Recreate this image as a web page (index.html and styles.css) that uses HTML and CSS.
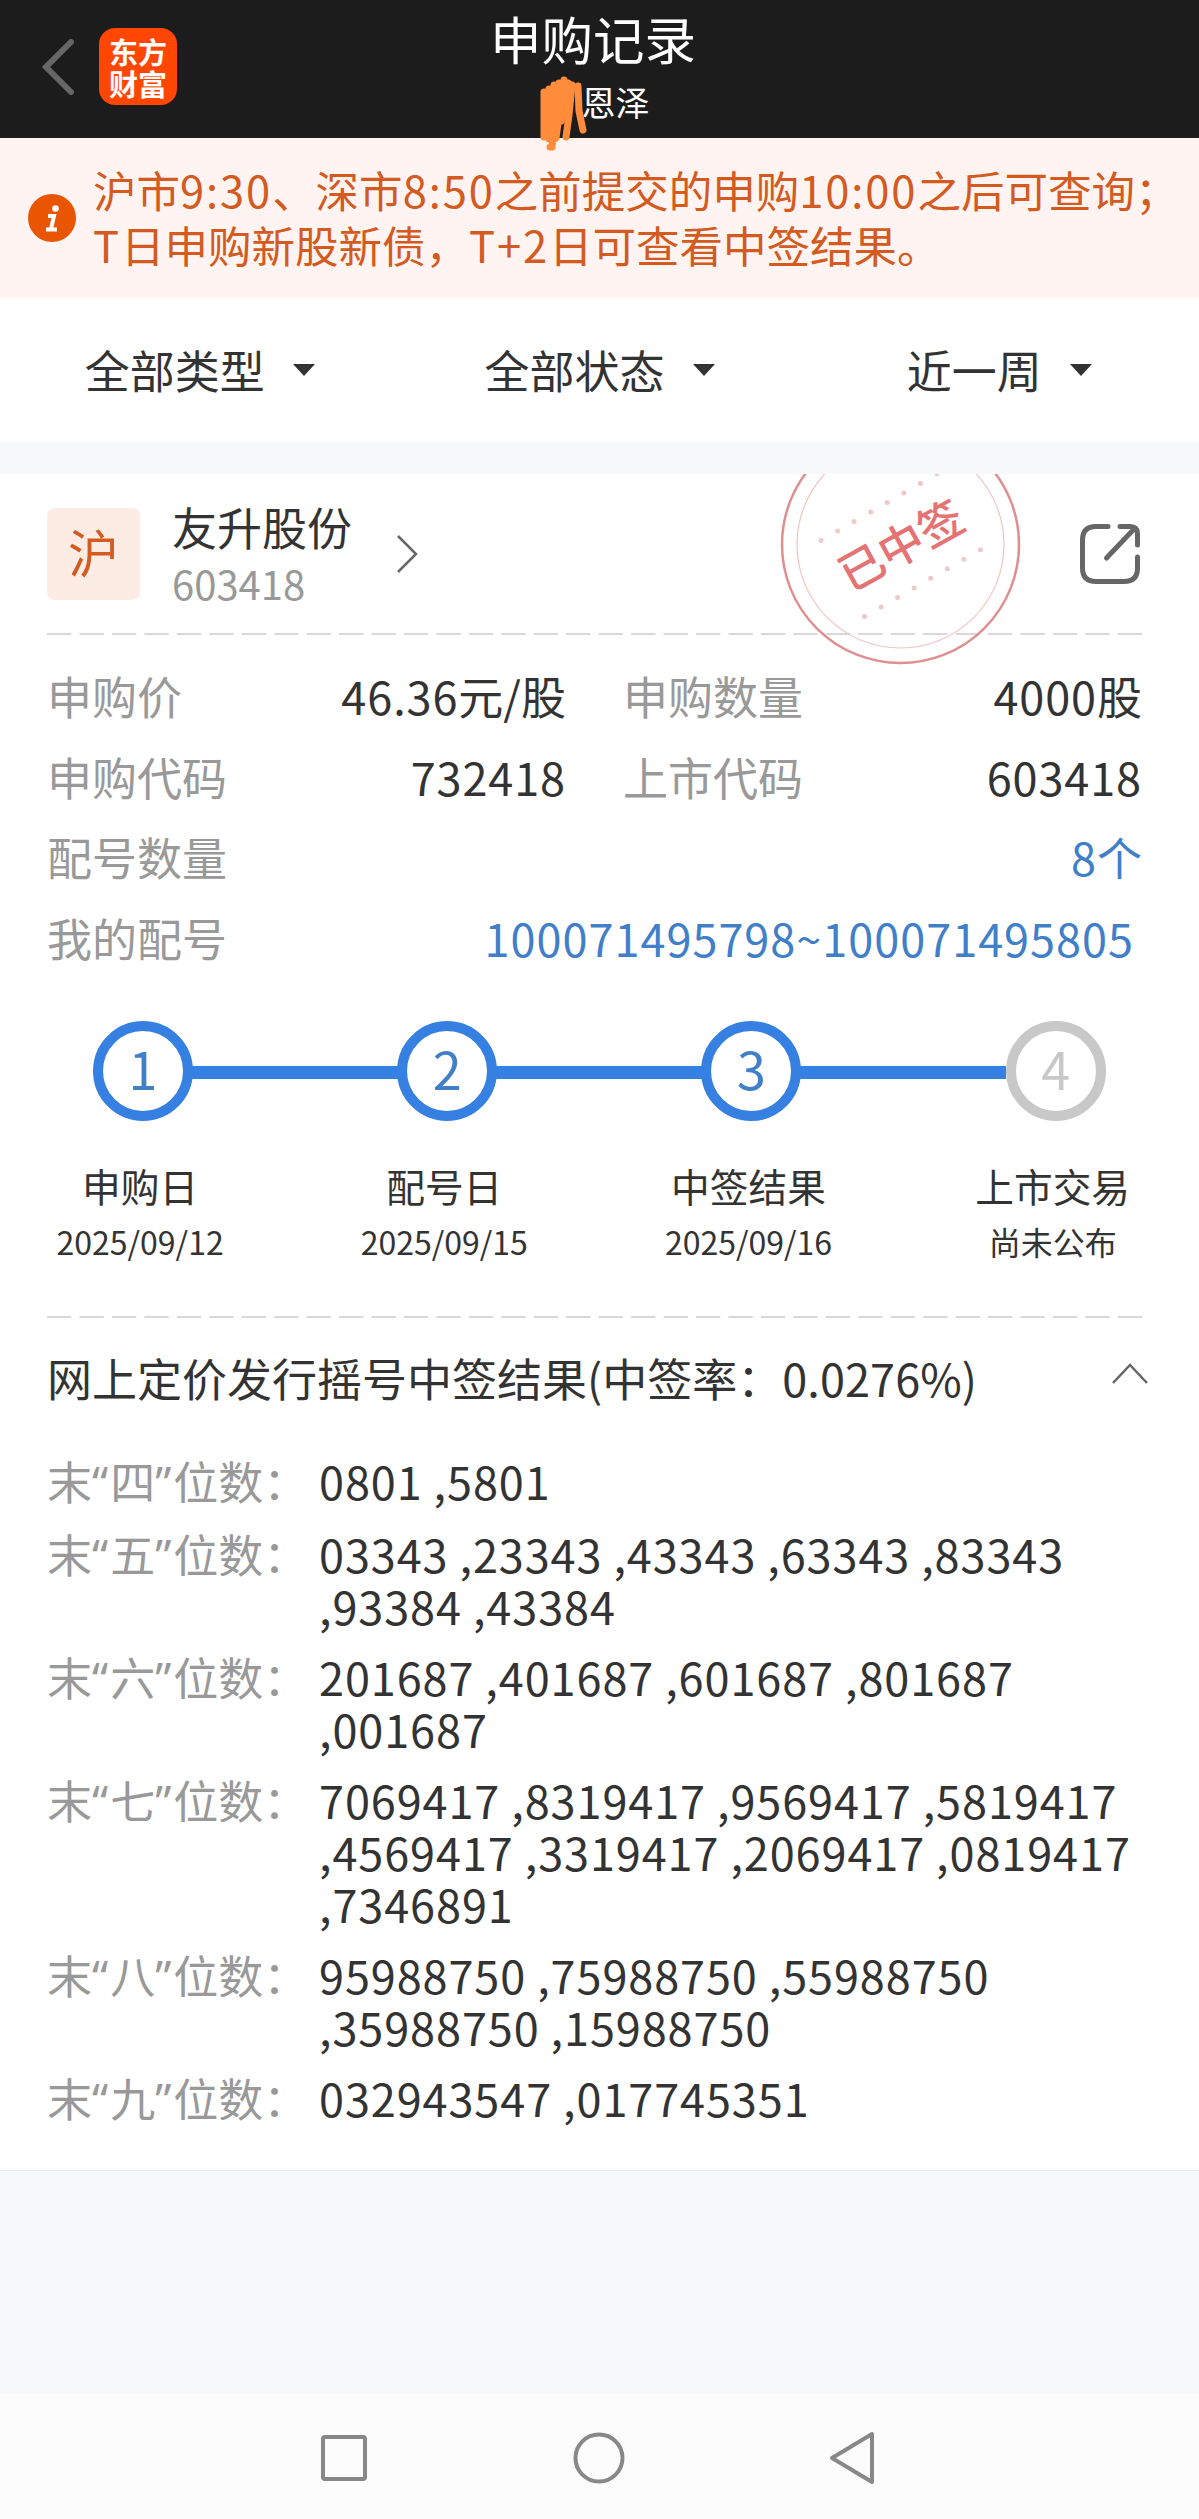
FILE: index.html
```
<!DOCTYPE html>
<html lang="zh-CN">
<head>
  <meta charset="UTF-8" />
  <meta name="viewport" content="width=device-width, initial-scale=1.0"/>
  <title>申购记录</title>
  <link rel="stylesheet" href="styles.css">
</head>
<body>

<!-- Header -->
<div class="top-bar">
  <svg class="back" width="32" height="56" viewBox="0 0 32 56"><path d="M29 3L4 28L29 53"/></svg>
  <div class="logo"><span>东方</span><span>财富</span></div>
  <div class="heading">
    <div class="title">申购记录</div>
    <div class="account">恩泽</div>
  </div>
  <svg class="scribble" width="50" height="80" viewBox="0 0 50 80">
    <path d="M4 17V62M9 14V64M14 10V64M19 8L12 72L10 72M24 5L16 63M28 8L21 46M32 10L29 40L26 62"/>
    <path d="M38 11L39 36L43 55"/>
  </svg>
</div>

<!-- Notice -->
<div class="notice">
  <svg width="48" height="48" viewBox="0 0 48 48">
    <circle cx="24" cy="24" r="24"/>
    <circle class="mark" cx="27.500" cy="14.500" r="3.300"/>
    <path class="stem" d="M20 22H26L23 35M18 35.500H29"/>
  </svg>
  <div class="notice-text">
    沪市<span class="num">9:30</span>、深市<span class="num">8:50</span>之前提交的申购<span class="num">10:00</span>之后可查询；<br>
    <span class="num">T</span>日申购新股新债，<span class="num">T+2</span>日可查看中签结果。
  </div>
</div>

<!-- Filters -->
<div class="filters">
  <div class="filter">全部类型<i></i></div>
  <div class="filter">全部状态<i></i></div>
  <div class="filter">近一周<i></i></div>
</div>

<!-- Record card -->
<div class="card">
  <div class="stock">
    <div class="market">沪</div>
    <div class="stock-info">
      <div class="stock-name">友升股份</div>
      <div class="stock-code">603418</div>
    </div>
    <svg class="arrow" width="24" height="40" viewBox="0 0 24 40"><path d="M3 2L21 20L3 38"/></svg>
    <svg class="share" width="60" height="60" viewBox="0 0 60 60">
      <path d="M28 2.500H16Q2.500 2.500 2.500 16V44Q2.500 57.500 16 57.500H44Q57.500 57.500 57.500 44V33M40 2.500H50Q57.500 2.500 57.500 10V21M26.500 34L54 5"/>
    </svg>
  </div>

  <svg class="stamp" width="244" height="194" viewBox="779 474 244 194">
    <circle class="outer" cx="900.500" cy="544.500" r="118.500"/>
    <circle class="inner" cx="900.500" cy="544.500" r="103.500"/>
    <path class="dots" d="M821 540.500L942 471M864.500 616.500L986 546.500"/>
    <text x="901" y="562" transform="rotate(-29 901 545)">已中签</text>
  </svg>

  <svg class="dashes" width="1098" height="2" viewBox="0 0 1098 2"><path d="M0 1H1098"/></svg>

  <div class="details">
    <div class="row">
      <span class="label">申购价</span><span class="value half"><span class="num">46.36</span>元/股</span>
      <span class="label second">申购数量</span><span class="value"><span class="num">4000</span>股</span>
    </div>
    <div class="row">
      <span class="label">申购代码</span><span class="value half num">732418</span>
      <span class="label second">上市代码</span><span class="value num">603418</span>
    </div>
    <div class="row">
      <span class="label">配号数量</span><span class="value blue"><span class="num">8</span>个</span>
    </div>
    <div class="row">
      <span class="label">我的配号</span><span class="value blue num numbers">100071495798~100071495805</span>
    </div>
  </div>

  <!-- Timeline -->
  <div class="steps">
    <div class="step">
      <div class="circle">1</div>
      <div class="step-name">申购日</div>
      <div class="step-date">2025/09/12</div>
    </div>
    <div class="step">
      <div class="circle">2</div>
      <div class="step-name">配号日</div>
      <div class="step-date">2025/09/15</div>
    </div>
    <div class="step">
      <div class="circle">3</div>
      <div class="step-name">中签结果</div>
      <div class="step-date">2025/09/16</div>
    </div>
    <div class="step pending">
      <div class="circle">4</div>
      <div class="step-name">上市交易</div>
      <div class="step-date">尚未公布</div>
    </div>
  </div>

  <svg class="dashes" width="1098" height="2" viewBox="0 0 1098 2"><path d="M0 1H1098"/></svg>

  <!-- Lottery result -->
  <div class="result-title">
    <span>网上定价发行摇号中签结果(中签率：<span class="rate">0.0276%)</span></span>
    <svg width="38" height="24" viewBox="0 0 38 24"><path d="M2 21L19 3L36 21"/></svg>
  </div>
  <div class="results">
    <div class="result">
      <div class="label">末<q>“</q>四<q>”</q>位数：</div>
      <div class="num">0801 ,5801</div>
    </div>
    <div class="result">
      <div class="label">末<q>“</q>五<q>”</q>位数：</div>
      <div class="num">03343 ,23343 ,43343 ,63343 ,83343<br>,93384 ,43384</div>
    </div>
    <div class="result">
      <div class="label">末<q>“</q>六<q>”</q>位数：</div>
      <div class="num">201687 ,401687 ,601687 ,801687<br>,001687</div>
    </div>
    <div class="result">
      <div class="label">末<q>“</q>七<q>”</q>位数：</div>
      <div class="num">7069417 ,8319417 ,9569417 ,5819417<br>,4569417 ,3319417 ,2069417 ,0819417<br>,7346891</div>
    </div>
    <div class="result">
      <div class="label">末<q>“</q>八<q>”</q>位数：</div>
      <div class="num">95988750 ,75988750 ,55988750<br>,35988750 ,15988750</div>
    </div>
    <div class="result">
      <div class="label">末<q>“</q>九<q>”</q>位数：</div>
      <div class="num">032943547 ,017745351</div>
    </div>
  </div>
</div>

<!-- System navigation -->
<div class="nav">
  <svg width="60" height="60" viewBox="0 0 60 60"><rect x="9" y="9" width="42" height="42" rx="2"/></svg>
  <svg width="60" height="60" viewBox="0 0 60 60"><circle cx="30" cy="30" r="23.500"/></svg>
  <svg width="60" height="60" viewBox="0 0 60 60"><path d="M49 6V54L9 30Z"/></svg>
</div>

</body>
</html>
```
FILE: styles.css
```
* { box-sizing: border-box; margin: 0; padding: 0; }

body {
  display: flex;
  flex-direction: column;
  height: 2519px;
  font-family: "Noto Sans CJK SC", sans-serif;
  font-size: 45px;
  line-height: 52px;
  color: #333;
  background: #f6f8fa;
  white-space: nowrap;
}

svg { display: block; flex: none; fill: none; }

.num { letter-spacing: 0.92px; }
.label { color: #999; }

/* header */
.top-bar {
  position: relative;
  display: flex;
  height: 138px;
  background: #1c1c1c;
  color: white;
}

.back { margin: 39px 0 0 42px; stroke: #666; stroke-width: 6; stroke-linecap: round; }

.logo {
  display: flex;
  flex-direction: column;
  justify-content: center;
  align-items: center;
  width: 78px;
  height: 77px;
  margin: 28px 0 0 25px;
  border-radius: 16px;
  background: #ff4603;
  font-size: 29px;
  font-weight: bold;
  line-height: 32px;
}

.heading { margin: 8px 0 0 313px; width: 206px; text-align: center; }
.title { font-size: 51.5px; line-height: 60px; }
.account { padding-left: 45px; font-size: 34px; line-height: 68px; }

.scribble {
  position: absolute;
  left: 540px;
  top: 75px;
  stroke: #ff8c3a;
  stroke-width: 7;
  stroke-linecap: round;
  stroke-linejoin: round;
}

/* notice */
.notice {
  display: flex;
  height: 160px;
  padding: 24px 0 0 28px;
  background: #fff4f1;
  color: #d35a20;
}

.notice svg { margin: 32px 17px 0 0; fill: #ea5504; }
.notice .mark { fill: white; }
.notice .stem { fill: none; stroke: white; stroke-width: 4; }
.notice-text { font-size: 43.5px; line-height: 55px; }
.notice-text .num { letter-spacing: 1.9px; }

/* filters */
.filters {
  display: flex;
  height: 144px;
  background: white;
}

.filter {
  flex: 1;
  display: flex;
  justify-content: center;
  align-items: center;
  gap: 28px;
}

.filter i {
  border: 11px solid transparent;
  border-top: 12px solid #333;
  border-bottom: 0;
}

/* card */
.card {
  position: relative;
  height: 1697px;
  margin-top: 32px;
  padding: 0 55px 0 47px;
  background: white;
  border-bottom: 1px solid #eaeaea;
}

.stock { display: flex; height: 159px; padding-top: 34px; }

.market {
  width: 93px;
  height: 92px;
  border-radius: 8px;
  background: #fdece4;
  color: #d35a20;
  font-size: 51px;
  line-height: 86px;
  text-align: center;
}

.stock-info { width: 180px; margin: -9px 0 0 32px; }
.stock-name { line-height: 56px; }
.stock-code { font-size: 40px; line-height: 56px; color: #999; }
.arrow { margin: 26px 0 0 43px; stroke: #666; stroke-width: 2.5; }
.share { margin: 16px 4px 0 auto; stroke: #666; stroke-width: 5; stroke-linecap: round; }

.stamp { position: absolute; left: 779px; top: 0; }
.outer { stroke: #e08f90; stroke-width: 2.5; }
.inner { stroke: #f0c4c4; stroke-width: 1.2; }
.dots { stroke: #efc9c9; stroke-width: 5; stroke-linecap: round; stroke-dasharray: 0 19.1; }
.stamp text { fill: #e57373; font-size: 45px; font-weight: 500; text-anchor: middle; }

.dashes { stroke: #ccc; stroke-width: 1.5; stroke-dasharray: 24.3 8.15; }

.details { padding-top: 21px; }
.row { display: flex; height: 80.5px; line-height: 80px; }
.value { margin-left: auto; margin-right: 2px; }
.value.half { margin: 0; text-align: right; flex: 1; }
.row .label { width: 180px; }
.second { margin-left: 57px; }
.second + .value { width: 339px; margin-left: 0; text-align: right; }
.blue { color: #417fc8; }
.value.numbers { margin-right: 10px; letter-spacing: 1px; }

/* timeline */
.steps {
  display: flex;
  height: 295px;
  margin: 43px -55px 0 -59px;
}

.step {
  flex: none;
  width: 304.2px;
  text-align: center;
}

.circle {
  position: relative;
  width: 100px;
  height: 100px;
  margin-left: 105px;
  border: 10px solid #3580e0;
  border-radius: 50%;
  color: #417fc8;
  font-size: 52px;
  line-height: 74px;
}

/* bar to the next circle */
.circle::after {
  content: "";
  position: absolute;
  left: 89px;
  top: 35px;
  width: 206px;
  height: 13px;
  background: #3580e0;
}

.pending .circle { border-color: #c8c8c8; color: #c8c8c8; }
.pending .circle::after { display: none; }

.step-name { margin-top: 36px; font-size: 38.7px; line-height: 56px; }
.step-date { font-size: 32px; line-height: 56px; }

/* results */
.result-title {
  display: flex;
  justify-content: space-between;
  margin-top: 34px;
}

.rate { letter-spacing: 0.1px; }
.result-title svg { margin: 10px -5px 0 0; stroke: #666; stroke-width: 2.5; }

.results { margin-top: 51px; }
.result { display: flex; margin-bottom: 19px; }
.result .label { width: 272px; }
.result q { font-family: "Noto Sans", sans-serif; quotes: none; letter-spacing: 2px; }

/* system navigation */
.nav {
  display: flex;
  height: 125px;
  margin-top: auto;
  padding: 34px 0 0 314px;
  gap: 194.5px;
  background: #fcfcfc;
  stroke: #888;
  stroke-width: 4;
  stroke-linejoin: round;
}
```
